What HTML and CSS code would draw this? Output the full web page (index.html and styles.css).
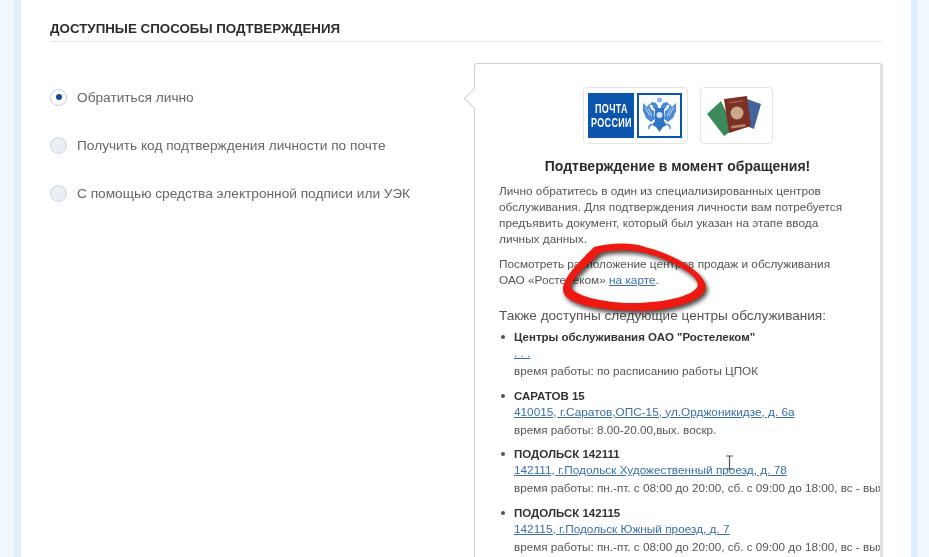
FILE: index.html
```html
<!DOCTYPE html>
<html lang="ru">
<head>
    <meta charset="UTF-8">
    <title>Доступные способы подтверждения</title>
    <link rel="stylesheet" href="styles.css">
</head>

<body>
    <div class="page">
        <h2 class="section-title">Доступные способы подтверждения</h2>

        <div class="columns">
            <div class="options">
                <div class="option">
                    <span class="radio radio-on"></span>
                    <span>Обратиться лично</span>
                </div>
                <div class="option">
                    <span class="radio"></span>
                    <span>Получить код подтверждения личности по почте</span>
                </div>
                <div class="option">
                    <span class="radio"></span>
                    <span>С помощью средства электронной подписи или УЭК</span>
                </div>
            </div>

            <div class="panel">
                <span class="panel-arrow"></span>

                <div class="thumbs">
                    <div class="thumb thumb-post">
                        <div class="post-name"><span class="post-label">ПОЧТА<br>РОССИИ</span></div>
                        <div class="post-eagle">
                            <svg width="41" height="41" viewBox="0 0 41 41">
                                <g id="eagle-half" fill="#4a8bd6">
                                    <path d="M4 8 L8 12 L10 9 L12 14 L15 16 L16 24 L12 27 L7 23 L4 16 Z"/>
                                    <path d="M19 15 L15 14 L13 10 L10 10 L13 7 L17 8 L19 11 Z"/>
                                    <path fill="none" stroke="#4a8bd6" stroke-width="1.4" d="M13 29 Q9 31 10 34"/>
                                    <path fill="none" stroke="#d5e5f6" stroke-width="0.8" d="M6 12 L11 21 M9 13 L13 21"/>
                                </g>
                                <use href="#eagle-half" transform="translate(41 0) scale(-1 1)"/>
                                <path fill="#2f74c6" d="M16 13 H25 V26 L28 30 L24 32 L20.5 37 L17 32 L13 30 L16 26 Z"/>
                                <circle cx="20.5" cy="5" r="2.6" fill="#8db5e4"/>
                                <circle cx="20.5" cy="20" r="3" fill="#d5e5f6"/>
                            </svg>
                        </div>
                    </div>
                    <div class="thumb thumb-docs">
                        <svg width="65" height="50" viewBox="0 0 65 50">
                            <polygon fill="#3c8a5c" points="3,23 17,10 30,38 20,45"/>
                            <polygon fill="#44649c" points="43,8 57,13 50,38 45,36"/>
                            <polygon fill="#7c3024" points="20,8 43,5 47,35 25,42"/>
                            <circle cx="33" cy="22" r="6.5" fill="#cba88c"/>
                            <polygon fill="#b98a6c" points="27,35 41,33 41.5,35.5 27.5,37.5"/>
                            <polygon fill="#a0604c" points="25,11 39,9 39.3,10.5 25.3,12.5"/>
                        </svg>
                    </div>
                </div>

                <h3 class="panel-title">Подтверждение в момент обращения!</h3>

                <p class="panel-text">
                    Лично обратитесь в один из специализированных центров<br>
                    обслуживания. Для подтверждения личности вам потребуется<br>
                    предъявить документ, который был указан на этапе ввода<br>
                    личных данных.
                </p>
                <p class="panel-text">
                    Посмотреть расположение центров продаж и обслуживания<br>
                    ОАО «Ростелеком» <a href="#">на карте</a>.
                </p>

                <h4 class="centers-title">Также доступны следующие центры обслуживания:</h4>

                <ul class="centers">
                    <li>
                        <b>Центры обслуживания ОАО "Ростелеком"</b>
                        <a href="#">. . .</a>
                        <span>время работы: по расписанию работы ЦПОК</span>
                    </li>
                    <li>
                        <b>САРАТОВ 15</b>
                        <a href="#">410015, г.Саратов,ОПС-15, ул.Орджоникидзе, д. 6а</a>
                        <span>время работы: 8.00-20.00,вых. воскр.</span>
                    </li>
                    <li>
                        <b>ПОДОЛЬСК 142111</b>
                        <a href="#">142111, г.Подольск Художественный проезд, д. 78</a>
                        <span>время работы: пн.-пт. с 08:00 до 20:00, сб. с 09:00 до 18:00, вс - выходной</span>
                    </li>
                    <li>
                        <b>ПОДОЛЬСК 142115</b>
                        <a href="#">142115, г.Подольск Южный проезд, д. 7</a>
                        <span>время работы: пн.-пт. с 08:00 до 20:00, сб. с 09:00 до 18:00, вс - выходной</span>
                    </li>
                </ul>

                <svg class="ring" width="170" height="90" viewBox="0 0 170 90">
                    <path fill="#ee1a12" fill-rule="evenodd" d="M44 12 C60 8 80 7 95 12 C120 18 155 36 156 52 C155 66 122 76 88 76 C52 76 12 70 13 54 C13 42 32 24 44 12 Z M50 18 C68 14 88 15 105 21 C125 28 148 40 148 50 C146 60 118 67 88 68 C55 69 22 60 21 52 C22 42 40 28 50 18 Z"/>
                </svg>

                <svg class="cursor" width="9" height="15" viewBox="0 0 9 15">
                    <path fill="none" stroke="#555" stroke-width="1.2" d="M1 1 H8 M4.5 1 V14 M1 14 H8"/>
                </svg>
            </div>
        </div>
    </div>
</body>
</html>
```

FILE: styles.css
```css
* {
    box-sizing: border-box;
    margin: 0;
    padding: 0;
}

html, body {
    height: 557px;
    overflow: hidden;
}

body {
    background-color: #f0f7fd;
    font-family: "Liberation Sans", Arial, sans-serif;
    color: #555;
    padding: 0 11px 0 14px;
}

.page {
    height: 557px;
    background-color: #fff;
    border-left: 7px solid #dfeefb;
    border-right: 7px solid #dfeefb;
    padding: 22px 29px 0;
    filter: blur(0.5px);
}

.section-title {
    font-size: 13.35px;
    line-height: 14px;
    font-weight: bold;
    text-transform: uppercase;
    color: #2c2c2c;
    padding-bottom: 5px;
    border-bottom: 1px solid #e2e5e8;
}

.columns {
    display: flex;
    justify-content: space-between;
    margin-top: 21px;
}

.options {
    display: flex;
    flex-direction: column;
    gap: 32px;
    padding-top: 26px;
}

.option {
    display: flex;
    align-items: center;
    gap: 10px;
    height: 16px;
    font-size: 13.7px;
    color: #666;
}

.radio {
    width: 17px;
    height: 17px;
    border-radius: 50%;
    border: 1px solid #cdd3dc;
    background-color: #eceef6;
    flex: none;
}

.radio-on {
    background-color: #fff;
    border-color: #b9cde6;
    position: relative;
}

.radio-on::after {
    content: "";
    position: absolute;
    left: 4.5px;
    top: 4.5px;
    width: 6px;
    height: 6px;
    border-radius: 50%;
    background-color: #0d4a98;
}

.panel {
    position: relative;
    width: 409px;
    height: 520px;
    margin-right: -1px;
    background-color: #fff;
    border: 1px solid #cfcfcf;
    border-right: 3px solid #e2e2e2;
    border-radius: 3px;
    padding: 23px 0 0 24px;
}

.panel-arrow {
    position: absolute;
    left: -8px;
    top: 27px;
    width: 15px;
    height: 15px;
    background-color: #fff;
    border-left: 1px solid #cfcfcf;
    border-bottom: 1px solid #cfcfcf;
    transform: rotate(45deg);
}

.thumbs {
    display: flex;
    justify-content: center;
    gap: 12px;
    margin-left: -24px;
}

.thumb {
    display: flex;
    align-items: center;
    justify-content: center;
    height: 57px;
    border: 1px solid #e4e4e4;
    border-radius: 4px;
}

.thumb-post {
    width: 105px;
    gap: 3px;
}

.thumb-docs {
    width: 73px;
}

.post-name {
    width: 46px;
    height: 45px;
    display: flex;
    align-items: center;
    justify-content: center;
    background-color: #0b55ad;
    color: #fff;
    font-size: 12.5px;
    line-height: 14px;
    font-weight: bold;
    text-align: center;
}

.post-label {
    flex: none;
    letter-spacing: 0.5px;
    transform: scaleX(0.72);
}

.post-eagle {
    width: 45px;
    height: 45px;
    display: flex;
    align-items: center;
    justify-content: center;
    border: 2px solid #0b55ad;
}

.panel-title {
    font-size: 14px;
    line-height: 16px;
    font-weight: bold;
    color: #2c2c2c;
    text-align: center;
    margin: 14px 0 9px -24px;
}

.panel-text {
    font-size: 11.8px;
    line-height: 16px;
    color: #555;
    margin-bottom: 9px;
}

.panel-text a,
.centers a {
    color: #3a6fa8;
}

.centers-title {
    font-size: 13.6px;
    line-height: 16px;
    font-weight: normal;
    color: #555;
    margin-top: 20px;
}

.centers {
    list-style: none;
    margin-top: 5px;
}

.centers li {
    position: relative;
    display: flex;
    flex-direction: column;
    padding-left: 15px;
    margin-bottom: 8.5px;
    font-size: 11.8px;
    line-height: 16px;
    overflow: hidden;
    white-space: nowrap;
}

.centers li::before {
    content: "";
    position: absolute;
    left: 2px;
    top: 6px;
    width: 4px;
    height: 4px;
    border-radius: 50%;
    background-color: #555;
}

.centers b {
    font-size: 11.5px;
    color: #333;
}

.centers span {
    margin-top: 2px;
    font-size: 11.7px;
}

.ring {
    position: absolute;
    left: 75px;
    top: 171px;
    filter: drop-shadow(2px 3px 2px rgba(0, 0, 0, 0.7));
}

.cursor {
    position: absolute;
    left: 250px;
    top: 391px;
}
```
